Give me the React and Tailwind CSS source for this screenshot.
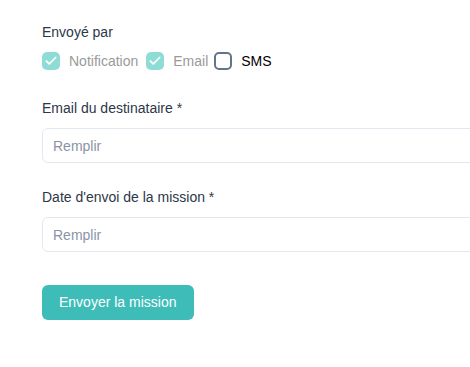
import { Check } from 'lucide-react';

function Box({ checked }) {
  if (checked) {
    return (
      <span className="w-[18px] h-[18px] rounded-[5px] bg-[#8fdcd7] flex items-center justify-center shrink-0">
        <Check size={14} strokeWidth={3} className="text-white" />
      </span>
    );
  }
  return <span className="block w-[18px] h-[18px] rounded-[5px] border-2 border-[#64748b] bg-white shrink-0" />;
}

function Field({ label, className }) {
  return (
    <div className={className}>
      <label className="block text-[14px] leading-5 text-[#2d3748]">{label}</label>
      <input
        placeholder="Remplir"
        className="mt-[10px] w-[520px] h-[35px] px-[10px] border border-[#e2e8f0] rounded-[6px] text-[14px] text-[#2d3748] placeholder:text-[#8a94a6] outline-none"
      />
    </div>
  );
}

export default function App() {
  return (
    <div className="w-[470px] h-[367px] overflow-hidden bg-white font-['Liberation_Sans',Arial,sans-serif]">
      <div className="pl-[42px] pt-[22px]">
        <p className="text-[14px] leading-5 text-[#2d3748]">Envoyé par</p>
        <div className="mt-[10px] flex items-center h-[18px] text-[14px]">
          <Box checked />
          <span className="ml-[9px] text-[#9a9a9a]">Notification</span>
          <span className="ml-[8px]"><Box checked /></span>
          <span className="ml-[9px] text-[#9a9a9a]">Email</span>
          <span className="ml-[6px]"><Box /></span>
          <span className="ml-[9px] text-black">SMS</span>
        </div>

        <Field label="Email du destinataire *" className="mt-[28px]" />
        <Field label="Date d'envoi de la mission *" className="mt-[24px]" />

        <button className="mt-[33px] h-[35px] px-[17px] rounded-[6px] bg-[#3dbcb8] text-white text-[14px]">
          Envoyer la mission
        </button>
      </div>
    </div>
  );
}
